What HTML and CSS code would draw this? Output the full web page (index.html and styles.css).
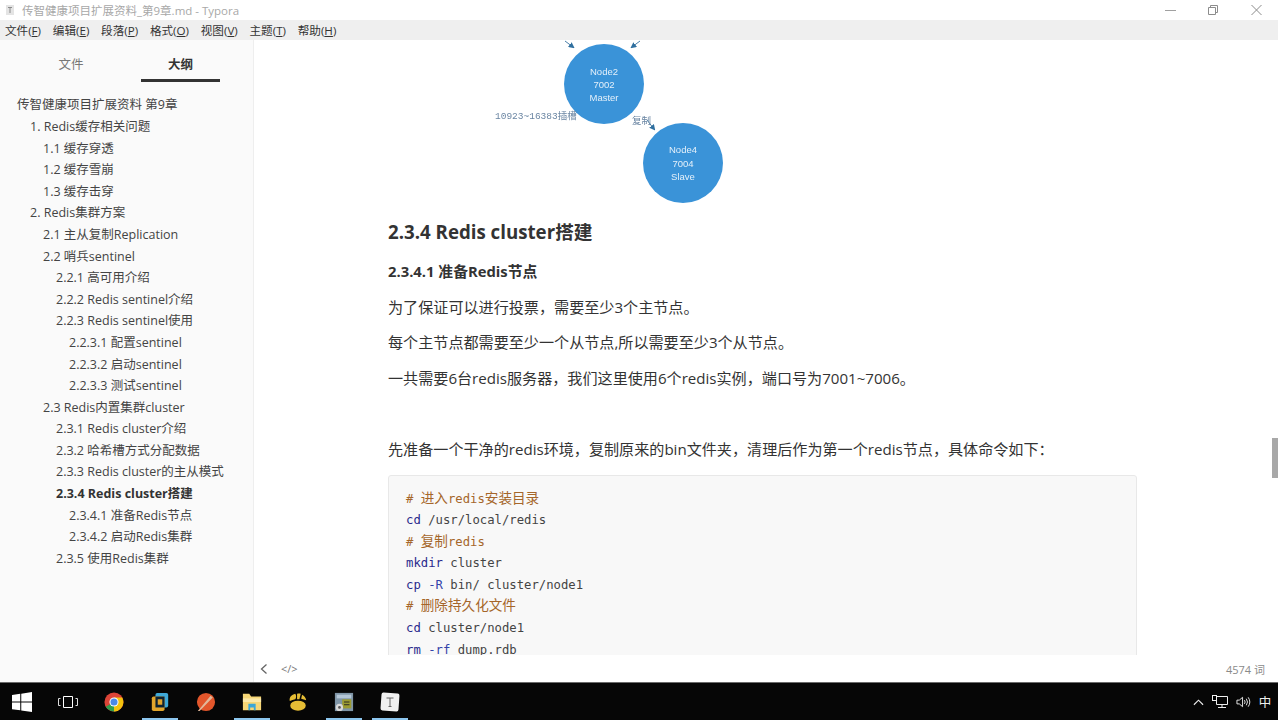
FILE: index.html
```html
<!DOCTYPE html>
<html lang="zh">
<head>
<meta charset="utf-8">
<title>Typora</title>
<link rel="stylesheet" href="styles.css">
</head>
<body>
<div class="app">
  <header class="titlebar">
    <svg class="app-icon" viewBox="0 0 12 12"><path d="M2 1h8v10H2z" fill="#e4e4e4"/><path d="M4 3.500h4M6 3.500V9" stroke="#8a8a8a" fill="none"/></svg>
    <span class="title-text">传智健康项目扩展资料_第9章.md - Typora</span>
    <div class="win-controls">
      <svg viewBox="0 0 43 20"><path d="M16 10.500h11" stroke="#a0a0a0" fill="none"/></svg>
      <svg viewBox="0 0 43 20"><path d="M16.500 7.500h7v7h-7zM18.500 7V5.500h7v7H24" stroke="#8c8c8c" fill="none"/></svg>
      <svg viewBox="0 0 43 20"><path d="M16.500 5l10 10M26.500 5l-10 10" stroke="#8c8c8c" fill="none"/></svg>
    </div>
  </header>
  <nav class="menubar">
    <span>文件(<u>F</u>)</span><span>编辑(<u>E</u>)</span><span>段落(<u>P</u>)</span><span>格式(<u>O</u>)</span><span>视图(<u>V</u>)</span><span>主题(<u>T</u>)</span><span>帮助(<u>H</u>)</span>
  </nav>
  <div class="workspace">
    <aside class="sidebar">
      <div class="tabs">
        <div class="tab">文件</div>
        <div class="tab tab-active">大纲</div>
      </div>
      <ul class="outline">
        <li class="l1">传智健康项目扩展资料 第9章</li>
        <li class="l2">1. Redis缓存相关问题</li>
        <li class="l3">1.1 缓存穿透</li>
        <li class="l3">1.2 缓存雪崩</li>
        <li class="l3">1.3 缓存击穿</li>
        <li class="l2">2. Redis集群方案</li>
        <li class="l3">2.1 主从复制Replication</li>
        <li class="l3">2.2 哨兵sentinel</li>
        <li class="l4">2.2.1 高可用介绍</li>
        <li class="l4">2.2.2 Redis sentinel介绍</li>
        <li class="l4">2.2.3 Redis sentinel使用</li>
        <li class="l5">2.2.3.1 配置sentinel</li>
        <li class="l5">2.2.3.2 启动sentinel</li>
        <li class="l5">2.2.3.3 测试sentinel</li>
        <li class="l3">2.3 Redis内置集群cluster</li>
        <li class="l4">2.3.1 Redis cluster介绍</li>
        <li class="l4">2.3.2 哈希槽方式分配数据</li>
        <li class="l4">2.3.3 Redis cluster的主从模式</li>
        <li class="l4 active">2.3.4 Redis cluster搭建</li>
        <li class="l5">2.3.4.1 准备Redis节点</li>
        <li class="l5">2.3.4.2 启动Redis集群</li>
        <li class="l4">2.3.5 使用Redis集群</li>
      </ul>
    </aside>
    <main class="main">
      <div class="doc">
        <article class="page">
          <svg class="diagram" viewBox="0 0 749 165">
            <defs>
              <marker id="tip" markerWidth="6" markerHeight="6" refX="4" refY="3" orient="auto"><path d="M0 0L6 3L0 6z" fill="#2f6f9f"/></marker>
            </defs>
            <path d="M177 1L185 7" stroke="#4a7fa8" marker-end="url(#tip)"/>
            <path d="M252 1L244 7" stroke="#4a7fa8" marker-end="url(#tip)"/>
            <path d="M259 80L266 89" stroke="#4a7fa8" marker-end="url(#tip)"/>
            <circle cx="216" cy="44" r="40" fill="#3a93d8"/>
            <circle cx="295" cy="123" r="40" fill="#3a93d8"/>
            <text class="node" x="216" y="35">Node2</text>
            <text class="node" x="216" y="48">7002</text>
            <text class="node" x="216" y="61">Master</text>
            <text class="node" x="295" y="113">Node4</text>
            <text class="node" x="295" y="127">7004</text>
            <text class="node" x="295" y="140">Slave</text>
            <text class="edge" x="107" y="79">10923~16383插槽</text>
            <text class="edge" x="244" y="84">复制</text>
          </svg>
          <h3>2.3.4 Redis cluster搭建</h3>
          <h4>2.3.4.1 准备Redis节点</h4>
          <p class="first">为了保证可以进行投票，需要至少3个主节点。</p>
          <p>每个主节点都需要至少一个从节点,所以需要至少3个从节点。</p>
          <p>一共需要6台redis服务器，我们这里使用6个redis实例，端口号为7001~7006。</p>
          <p>&nbsp;</p>
          <p>先准备一个干净的redis环境，复制原来的bin文件夹，清理后作为第一个redis节点，具体命令如下：</p>
          <pre class="code"><span class="c"># <span class="z">进入</span>redis<span class="z">安装目录</span></span>
<span class="k">cd</span> /usr/local/redis
<span class="c"># <span class="z">复制</span>redis</span>
<span class="k">mkdir</span> cluster
<span class="k">cp</span> <span class="f">-R</span> bin/ cluster/node1
<span class="c"># <span class="z">删除持久化文件</span></span>
<span class="k">cd</span> cluster/node1
<span class="k">rm</span> <span class="f">-rf</span> dump.rdb</pre>
        </article>
        <div class="scroll-thumb"></div>
      </div>
      <footer class="status">
        <div class="status-left">
          <svg viewBox="0 0 10 12"><path d="M7.500 1.500L2.500 6l5 4.500" stroke="#666" stroke-width="1.300" fill="none"/></svg>
          <span class="src">&lt;/&gt;</span>
        </div>
        <span class="count">4574 词</span>
      </footer>
    </main>
  </div>
  <footer class="taskbar">
    <div class="task-item"><svg viewBox="0 0 16 16"><path d="M0 2.300L6.600 1.400V7.600H0zM7.400 1.300L16 0V7.600H7.400zM0 8.400H6.600V14.600L0 13.700zM7.400 8.400H16V16L7.400 14.700z" fill="#fff"/></svg></div>
    <div class="task-item"><svg viewBox="0 0 20 16"><path d="M5.500 2.500h9v11h-9z" stroke="#fff" fill="none"/><path d="M2.500 4.500h-2v7h2M17.500 4.500h2v7h-2" stroke="#ddd" fill="none"/></svg></div>
    <div class="task-item"><svg viewBox="0 0 22 22"><circle cx="11" cy="11" r="10.500" fill="#db4437"/><path d="M11 11L1.900 16.200A10.500 10.500 0 0 0 14 21z" fill="#2f9e4f"/><path d="M11 6h9A10.500 10.500 0 0 1 11 21.500z" fill="#f4c20d"/><circle cx="11" cy="11" r="5" fill="#fff"/><circle cx="11" cy="11" r="3.900" fill="#4a89e8"/></svg></div>
    <div class="task-item running"><svg viewBox="0 0 20 22"><rect x="5" y="1" width="14" height="16" rx="2" fill="#3fa9d8"/><rect x="1" y="5" width="14" height="16" rx="2" fill="#e2a52c"/><rect x="5" y="5" width="10" height="12" fill="#0c2233"/><rect x="7.500" y="8" width="5" height="6" fill="#e2a52c"/></svg></div>
    <div class="task-item"><svg viewBox="0 0 22 22"><circle cx="11" cy="11" r="10" fill="#e2562b"/><path d="M2 21L14 6.500l2-2.500 2.500 2L16 8.500 4 21z" fill="#e2b89a"/></svg></div>
    <div class="task-item running"><svg viewBox="0 0 22 20"><path d="M1 1h7l2 3h11v15H1z" fill="#f6d676"/><path d="M1 6h20v4H1z" fill="#fbe8a8"/><path d="M7 12h8v7h-2v-3H9v3H7z" fill="#3aa6d8"/></svg></div>
    <div class="task-item"><svg viewBox="0 0 22 20"><ellipse cx="11" cy="14" rx="8.500" ry="5.500" fill="#e6bd35"/><path d="M2 9C1 5 4 2 8 1c1.500 2 1 5 0 6-2 .5-4 1-6 2z" fill="#e6bd35"/><path d="M10 1c1.500-.5 3-.5 4 0l-1.500 6H10z" fill="#e6bd35"/><path d="M15.500 2c2.500 1 4 3.500 4.500 6l-5.500-1.500z" fill="#e6bd35"/></svg></div>
    <div class="task-item running"><svg viewBox="0 0 22 22"><rect x="1" y="1" width="20" height="20" fill="#7f95a6"/><rect x="3" y="3" width="16" height="4" fill="#b4c6d6"/><rect x="9" y="8" width="10" height="10" fill="#9b9b30"/><path d="M11 11h6M11 14h6" stroke="#222"/><circle cx="6" cy="17" r="4" fill="#d8d8d8"/><circle cx="6" cy="17" r="1.500" fill="#555"/></svg></div>
    <div class="task-item running"><svg viewBox="0 0 20 20"><rect x="1" y="1" width="18" height="18" rx="2" fill="#f1f1f1" transform="rotate(4 10 10)"/><path d="M6.500 6h7M10 6v8.500M8.500 14.500h3" stroke="#666" fill="none"/></svg></div>
    <div class="tray">
      <svg class="tray-chev" viewBox="0 0 12 8"><path d="M1 7l5-5 5 5" stroke="#eee" stroke-width="1.200" fill="none"/></svg>
      <svg class="tray-net" viewBox="0 0 16 14"><path d="M4.500 1.500h11v8h-11zM10 9.500v3M6 12.500h8" stroke="#eee" fill="none"/><rect x="0.500" y="0.500" width="4" height="5" fill="#000" stroke="#eee"/></svg>
      <svg class="tray-vol" viewBox="0 0 16 14"><path d="M1 5h2.500L7 2v10L3.500 9H1z" stroke="#eee" fill="none"/><path d="M9 5q1.500 2 0 4M11 3.500q2.500 3.500 0 7M13 2q3.500 5 0 10" stroke="#eee" fill="none"/></svg>
      <span class="ime">中</span>
    </div>
  </footer>
</div>
</body>
</html>
```
FILE: styles.css
```css
* { box-sizing: border-box; }
html, body { margin: 0; padding: 0; height: 100%; overflow: hidden; }
body { font-family: "Open Sans", "Noto Sans CJK SC", sans-serif; color: #333; background: #fff; }
.app { width: 1278px; height: 720px; display: flex; flex-direction: column; }

.titlebar { height: 20px; display: flex; align-items: center; background: #fff; padding-left: 4px; flex: none; }
.app-icon { width: 12px; height: 12px; margin-right: 6px; }
.title-text { font-size: 11.500px; color: #a8a8a8; white-space: nowrap; }
.win-controls { margin-left: auto; display: flex; }
.win-controls svg { width: 43px; height: 20px; display: block; }

.menubar { height: 20px; background: #efefef; display: flex; gap: 11.800px; align-items: center; padding-left: 5px; font-size: 11.600px; color: #333; flex: none; }
.menubar span { white-space: nowrap; }

.workspace { flex: 1; display: flex; min-height: 0; }
.sidebar { width: 254px; flex: none; background: #fafafa; border-right: 1px solid #eeeeee; }
.tabs { display: flex; padding: 0 33px 0 16px; height: 42px; }
.tab { width: 110px; text-align: center; font-size: 12.500px; color: #777; line-height: 18px; padding-top: 16px; }
.tab-active { width: 79px; margin-left: 15px; color: #333; font-weight: 700; border-bottom: 3px solid #333; }
.outline { list-style: none; margin: 12.400px 0 0; padding: 0; font-size: 12.500px; color: #444; }
.outline li { height: 21.600px; line-height: 21.600px; white-space: nowrap; }
.l1 { padding-left: 17px; }
.l2 { padding-left: 30px; }
.l3 { padding-left: 43px; }
.l4 { padding-left: 56px; }
.l5 { padding-left: 69px; }
.outline .active { font-weight: 700; color: #333; }

.main { flex: 1; display: flex; flex-direction: column; min-width: 0; background: #fff; }
.doc { height: 615px; overflow: hidden; position: relative; flex: none; }
.page { width: 749px; margin-left: 134px; }
.diagram { width: 749px; height: 165px; display: block; filter: blur(0.4px); }
.node { font-family: "Liberation Sans", sans-serif; font-size: 9.500px; fill: #e4f0fa; text-anchor: middle; }
.edge { font-family: "Liberation Mono", "Noto Sans CJK SC", monospace; font-size: 9.500px; fill: #6b86a3; }

h3 { font-size: 18.700px; line-height: 26px; font-weight: 700; margin: 14px 0 0; color: #333; }
h4 { font-size: 14.800px; line-height: 20px; font-weight: 700; margin: 15.500px 0 0; color: #333; }
p { font-size: 15.100px; line-height: 23px; margin: 12.500px 0 0; color: #333; white-space: nowrap; }
p.first { margin-top: 15px; }
.code { margin: 14px 0 0; padding: 13px 17px 0; background: #f8f8f8; border: 1px solid #e8e8e8; border-radius: 3px; font-family: "DejaVu Sans Mono", "Noto Sans CJK SC", monospace; font-size: 12.250px; line-height: 21.600px; color: #444; height: 240px; }
.c { color: #a5662a; }
.z { font-size: 13.600px; line-height: 1; }
.k { color: #2a2a8c; }
.f { color: #3344aa; }
.scroll-thumb { position: absolute; right: 0; top: 398px; width: 6px; height: 40px; background: #a8a8a8; }

.status { height: 27px; display: flex; align-items: center; justify-content: space-between; padding: 0 13px 0 5px; font-size: 11px; color: #888; flex: none; }
.status-left { display: flex; align-items: center; gap: 12px; }
.status-left svg { width: 10px; height: 12px; }
.src { font-size: 11px; color: #777; }
.count { color: #8a8a8a; }

.taskbar { height: 38px; background: #060606; border-top: 1px solid #6a6a6a; display: flex; align-items: center; flex: none; }
.task-item { width: 46px; height: 37px; display: flex; align-items: center; justify-content: center; flex: none; position: relative; left: -1px; }
.task-item svg { width: 20px; height: 20px; }
.task-item.running::after { content: ""; position: absolute; left: 5px; right: 5px; bottom: 0; height: 2px; background: #8cc6ee; }
.tray { margin-left: auto; display: flex; align-items: center; gap: 8px; padding-right: 6.750px; }
.tray-chev { width: 11px; height: 8px; }
.tray-net { width: 16px; height: 14px; }
.tray-vol { width: 15px; height: 14px; }
.ime { font-size: 12.500px; color: #eee; }
```
